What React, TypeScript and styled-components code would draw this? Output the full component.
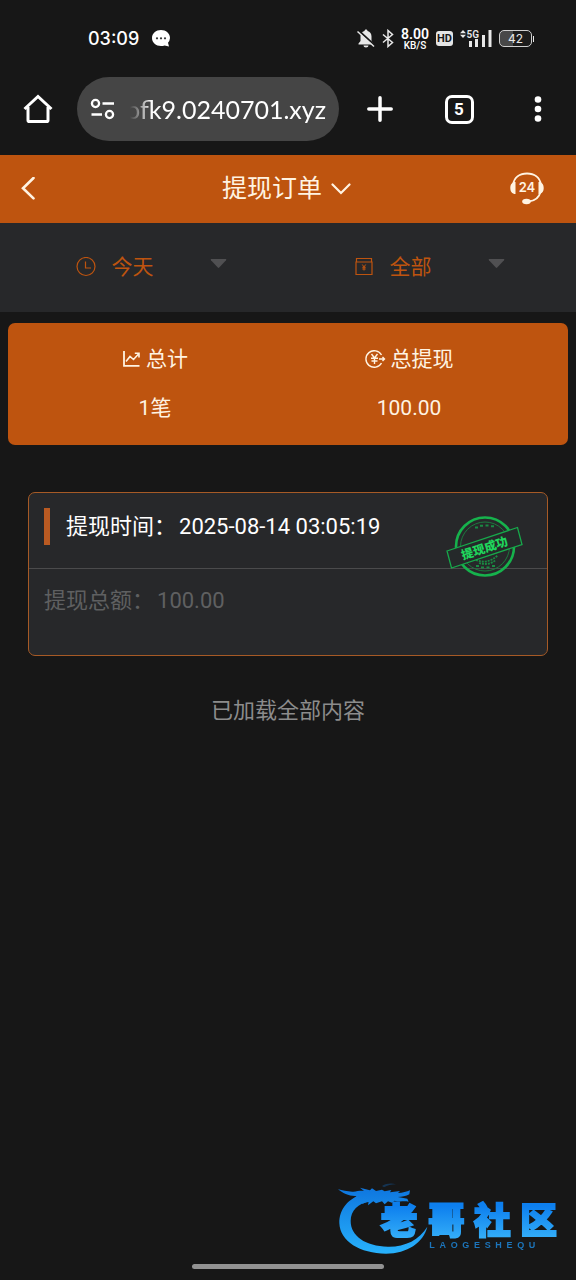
import React from "react";
import styled, { createGlobalStyle } from "styled-components";

const cjk = `Roboto, "Noto Sans CJK SC", sans-serif`;
const brand = "#be540f";
const cream = "#fff3e2";

const GlobalStyle = createGlobalStyle`
  *, *::before, *::after { box-sizing: border-box; }
  body { margin: 0; background: #171717; font-family: ${cjk}; color: #fff; }
  button { border: 0; padding: 0; background: none; color: inherit; font: inherit; cursor: pointer; }
  svg { display: block; flex: none; }
  dl, dt, dd, h1, p { margin: 0; font-weight: 400; }
`;

const Screen = styled.div`
  min-height: 100vh;
  display: flex;
  flex-direction: column;
`;

/* Status bar */
const StatusBar = styled.header`
  height: 77px;
  padding: 0 42px 0 88px;
  display: flex;
  align-items: center;
  justify-content: space-between;
`;
const StatusGroup = styled.div<{ $gap: number }>`
  display: flex;
  align-items: center;
  gap: ${(p) => p.$gap}px;
  color: #e8e8e8;
`;
const Clock = styled.time`
  font: 500 18px/24px Inter, sans-serif;
  color: #fff;
`;
const NetSpeed = styled.div`
  display: flex;
  flex-direction: column;
  align-items: center;
  color: #fff;
  font: 500 10px/9px Roboto, sans-serif;
`;
const SpeedValue = styled.strong`
  font-size: 14px;
  line-height: 13px;
  font-weight: 600;
`;
const HdBadge = styled.span`
  width: 17px;
  height: 15px;
  border-radius: 3px;
  background: #e4e4e4;
  color: #171717;
  font: 700 11px/15px Roboto, sans-serif;
  text-align: center;
`;
const Battery = styled.span`
  width: 33px;
  height: 17px;
  border: 1px solid #cfcfcf;
  border-radius: 5px;
  background: linear-gradient(90deg, #484848 42%, #1c1c1c 42%);
  color: #e8e8e8;
  font: 400 12px/15px Inter, sans-serif;
  text-align: center;
`;

/* Browser toolbar */
const BrowserBar = styled.nav`
  display: flex;
  align-items: center;
  padding: 0 14px 14px;
`;
const ToolButton = styled.button`
  width: 48px;
  height: 48px;
  display: flex;
  align-items: center;
  justify-content: center;
`;
const ToolGroup = styled.div`
  display: flex;
  gap: 31px;
  padding-left: 17px;
`;
const AddressPill = styled.div`
  flex: 1;
  min-width: 0;
  height: 64px;
  margin-left: 15px;
  padding: 0 13px;
  border-radius: 32px;
  background: #454545;
  display: flex;
  align-items: center;
  gap: 4px;
`;
const AddressInput = styled.input`
  flex: 1;
  min-width: 0;
  border: 0;
  padding: 0;
  outline: 0;
  background: none;
  color: #fff;
  text-align: right;
  font: 400 25px/36px Lato, sans-serif;
  mask-image: linear-gradient(90deg, transparent 10px, #000 32px);
`;
const TabCount = styled.span`
  width: 29px;
  height: 29px;
  border: 3px solid #fff;
  border-radius: 7px;
  font: 700 17px/23px Roboto, sans-serif;
  text-align: center;
`;

/* Page header */
const TitleBar = styled.div`
  height: 68px;
  padding: 0 25px 0 18px;
  background: ${brand};
  color: ${cream};
  display: grid;
  grid-template-columns: 52px 1fr 48px;
  align-items: center;
  justify-items: center;
`;
const BackButton = styled(ToolButton)`
  justify-self: start;
  width: 20px;
`;
const TitleButton = styled.button`
  display: flex;
  align-items: center;
  gap: 9px;
  font-size: 25px;
  line-height: 36px;
`;

/* Filters */
const Filters = styled.form`
  height: 89px;
  padding: 0 8px 2px 12px;
  background: #27282a;
  display: grid;
  grid-template-columns: 1fr 1fr;
  align-items: center;
  justify-items: center;
`;
const Filter = styled.label`
  width: 151px;
  display: flex;
  align-items: center;
  gap: 16px;
  color: ${brand};
`;
const FilterSelect = styled.select`
  flex: 1;
  min-width: 0;
  appearance: none;
  border: 0;
  padding: 0;
  outline: 0;
  background: none;
  color: ${brand};
  font: 400 21px/32px ${cjk};
`;

/* Totals */
const Summary = styled.dl`
  margin: 11px 8px 0;
  padding: 21px 32px 22px 20px;
  border-radius: 7px;
  background: ${brand};
  color: ${cream};
  display: grid;
  grid-template-columns: 1fr 1fr;
  font-size: 21px;
  line-height: 30px;
`;
const Total = styled.div`
  display: flex;
  flex-direction: column;
  align-items: center;
  gap: 19px;
`;
const TotalLabel = styled.dt`
  display: flex;
  align-items: center;
  gap: 5px;
`;

/* Order */
const OrderCard = styled.article`
  position: relative;
  margin: 47px 28px 0;
  border: 1px solid #a65a26;
  border-radius: 7px;
  background: #27282a;
  font-size: 22px;
  line-height: 30px;
`;
const OrderHead = styled.div`
  padding: 15px 15px 23px;
  border-bottom: 1px solid #4b4b4c;
  display: flex;
  align-items: center;
  gap: 16px;
`;
const Marker = styled.span`
  width: 6px;
  height: 37px;
  background: #b95a22;
`;
const Field = styled.p`
  display: flex;
  gap: 3px;
`;
const OrderBody = styled.div`
  padding: 17px 15px 39px;
  color: #5f6061;
`;
const Stamp = styled.svg`
  position: absolute;
  top: 21px;
  right: 23px;
`;
const EndNote = styled.p`
  padding: 39px 0;
  text-align: center;
  color: #8c8c8c;
  font-size: 22px;
  line-height: 32px;
`;

const Watermark = styled.svg`
  position: fixed;
  right: 14px;
  bottom: 23px;
`;
const HomeIndicator = styled.div`
  width: 192px;
  height: 5px;
  margin: auto auto 11px;
  border-radius: 3px;
  background: #929292;
`;

const line = { fill: "none", stroke: "currentColor" } as const;

const ChatIcon = () => (
  <svg width="18" height="17" viewBox="0 0 18 17">
    <path d="M9 0C4 0 0 3.500 0 8s4 8 9 8c1.300 0 2.500-.200 3.600-.600L17 16.500l-1-3.700A8 8 0 0 0 18 8c0-4.500-4-8-9-8Z" fill="#fff" />
    <circle cx="5" cy="8.300" r="1.100" fill="#333" />
    <circle cx="9" cy="8.300" r="1.100" fill="#333" />
    <circle cx="13" cy="8.300" r="1.100" fill="#333" />
  </svg>
);

const MutedBellIcon = () => (
  <svg width="18" height="19" viewBox="0 0 18 19">
    <path d="M9 0.500c1 0 1.500.700 1.500 1.500 2.700.700 4 2.800 4 5.500v4.500l2 2.500v1h-15v-1l2-2.500V7.500c0-2.700 1.300-4.800 4-5.500C7.500 1.200 8 .500 9 .500Z" fill="currentColor" />
    <path d="M6.500 16.500h5a2.500 2 0 0 1-5 0Z" fill="currentColor" />
    <path d="M1.500 1.500 18 16.500" stroke="#171717" strokeWidth="2" />
    <path d="M.5 2.500 17 17.500" stroke="currentColor" strokeWidth="1.500" />
  </svg>
);

const BluetoothIcon = () => (
  <svg width="12" height="19" viewBox="0 0 12 19">
    <path d="M1 5.500 10.500 13.500 6 17.500V1.500l4.500 4L1 13.500" {...line} strokeWidth="1.500" />
  </svg>
);

const SignalIcon = () => (
  <svg width="32" height="19" viewBox="0 0 32 19">
    <path d="m3 1 3 3.200H0ZM3 9 0 5.800h6Z" fill="currentColor" />
    <text x="6.500" y="8.500" fontSize="10" fontWeight="600" fontFamily="Roboto, sans-serif" fill="currentColor">5G</text>
    <path d="M9 12h3v6H9ZM15 10h3v8h-3ZM22 6h3v12h-3ZM28.500 1h3v17h-3Z" fill="currentColor" />
  </svg>
);

const BatteryTip = () => (
  <svg width="1" height="6" viewBox="0 0 1 6"><path d="M0 0h1v6H0Z" fill="currentColor" /></svg>
);

const HomeIcon = () => (
  <svg width="30" height="30" viewBox="0 0 30 30">
    <path d="M1.500 15 15 2.500 28.500 15M5 13v13.200c0 .800.500 1.300 1.300 1.300h17.400c.800 0 1.300-.500 1.300-1.300V13" {...line} strokeWidth="3" />
  </svg>
);

const SiteSettingsIcon = () => (
  <svg width="26" height="22" viewBox="0 0 26 22">
    <g {...line} strokeWidth="2.300">
      <circle cx="5.500" cy="5.500" r="3.600" />
      <path d="M12.500 5.500H24M1.500 16.500H12" />
      <circle cx="19.500" cy="16.500" r="3.600" />
    </g>
  </svg>
);

const PlusIcon = () => (
  <svg width="26" height="26" viewBox="0 0 26 26">
    <path d="M13 1.800v22.400M1.800 13h22.400" {...line} strokeWidth="3.500" strokeLinecap="round" />
  </svg>
);

const MoreIcon = () => (
  <svg width="8" height="28" viewBox="0 0 8 28" fill="currentColor">
    <circle cx="4" cy="4.500" r="3.300" />
    <circle cx="4" cy="14" r="3.300" />
    <circle cx="4" cy="23.500" r="3.300" />
  </svg>
);

const BackIcon = () => (
  <svg width="14" height="24" viewBox="0 0 14 24">
    <path d="M12.500 1 2 11.200l10.500 10.200" {...line} strokeWidth="2.600" strokeLinecap="round" />
  </svg>
);

const ChevronDown = () => (
  <svg width="20" height="12" viewBox="0 0 20 12">
    <path d="m1.500 1.500 8.500 8.500 8.500-8.500" {...line} strokeWidth="2.200" strokeLinecap="round" />
  </svg>
);

const SupportIcon = () => (
  <svg width="34" height="34" viewBox="0 0 34 34" fill="currentColor">
    <path d="M3 13C4 5 10 1.500 17 1.500S30 5 31 13M30.500 20c-1.500 6-6.500 9-12 9.500" {...line} strokeWidth="1.800" />
    <path d="M5.500 10v12C2 22 .3 19.500.3 16S2 10 5.500 10ZM28.500 10v12c3.500 0 5.200-2.500 5.200-6s-1.700-6-5.200-6Z" />
    <ellipse cx="16.500" cy="29.500" rx="4.300" ry="2.700" />
    <text x="17" y="20" textAnchor="middle" fontSize="13" fontWeight="600" fontFamily="Inter, sans-serif">24</text>
  </svg>
);

const ClockIcon = () => (
  <svg width="20" height="20" viewBox="0 0 20 20">
    <g {...line} strokeWidth="1.200">
      <circle cx="10" cy="9.500" r="9" />
      <path d="M9.500 4.500V11H15" />
    </g>
  </svg>
);

const WalletIcon = () => (
  <svg width="20" height="20" viewBox="0 0 20 20">
    <g {...line} strokeWidth="1.200">
      <path d="M2 5h16v12.500H2ZM2.500 5V1.500h15V5" />
      <path d="m8.300 7.500 1.700 2.500 1.700-2.500M10 10v3.500M8.300 10.300h3.400M8.300 12h3.400" strokeWidth="1" />
    </g>
  </svg>
);

const CaretIcon = () => (
  <svg width="17" height="16" viewBox="0 0 17 16">
    <path d="M1.500 0h14c.800 0 1 .600.500 1.200L9.200 8.600c-.500.500-.900.500-1.400 0L1 1.200C.500.600.700 0 1.500 0Z" fill="#505052" />
  </svg>
);

const TrendIcon = () => (
  <svg width="19" height="19" viewBox="0 0 19 19">
    <g {...line} strokeWidth="1.800">
      <path d="M2 1v14.800h15.500" />
      <path d="m4 11.500 4-5 3.500 3L17 3.500M12.800 3.300H17V7.500" strokeWidth="1.600" />
    </g>
  </svg>
);

const YenOutIcon = () => (
  <svg width="21" height="19" viewBox="0 0 21 19">
    <g {...line} strokeWidth="1.400">
      <path d="M16.500 5A8.300 8.300 0 1 0 16.500 13M14 9h5.500M17.500 7l2 2-2 2" />
      <path d="m6.500 4 3 4 3-4M9.500 8v6M6 8.300h7M6.500 11h6" />
    </g>
  </svg>
);

const SuccessStamp = () => (
  <Stamp width="78" height="64" viewBox="0 0 78 64" role="img" aria-label="提现成功">
    <g fill="none" stroke="#17a94b">
      <circle cx="39" cy="32.500" r="29" strokeWidth="2.600" stroke="#16b24c" />
      <circle cx="39" cy="32.500" r="24.500" strokeWidth="1" stroke="#1c7a3e" />
      <path d="M29 13.500h3M34 11.800h3M39.500 11.500h3M45 12.300h3M30 52h3M35 53.500h3M40.500 53.500h3M46 52h3" strokeWidth="2" stroke="#1a8a43" />
      <path d="M30 46c7 3 15 2 22-5M33 49c6 2 12 1 17-3M35 43l17-5" strokeWidth="1.800" strokeDasharray="2 1" stroke="#1a8a43" />
      <path d="M1 37 71.500 13.500 76 30.500 5.500 54Z" fill="#25292a" strokeWidth="1.300" />
    </g>
    <text
      transform="translate(38.500 34) rotate(-18)"
      y="4.500"
      textAnchor="middle"
      fontFamily='"Noto Sans CJK SC", sans-serif'
      fontSize="12"
      fontWeight="900"
      fill="#1fd65c"
    >
      提现成功
    </text>
  </Stamp>
);

const CommunityLogo = () => (
  <Watermark width="228" height="77" viewBox="42 30 684 231" role="img" aria-label="老哥社区">
    <defs>
      <linearGradient id="logoBlue" gradientUnits="userSpaceOnUse" x1="0" y1="60" x2="0" y2="245">
        <stop offset="0" stopColor="#0f78e0" />
        <stop offset="1" stopColor="#27b0fb" />
      </linearGradient>
      <linearGradient id="nameBlue" gradientUnits="userSpaceOnUse" x1="0" y1="108" x2="0" y2="205">
        <stop offset="0" stopColor="#0d7fee" />
        <stop offset="1" stopColor="#34aef8" />
      </linearGradient>
    </defs>
    <g fill="url(#logoBlue)">
      <path d="M132 72C84 84 57 118 58 160c2 54 62 91 140 91 64-1 112-33 124-81-24 40-68 61-118 60C136 229 92 198 92 153c0-32 22-54 58-58Z" />
      <path d="M54 58c14 2 30 8 46 7 12-1 22-4 32-2l-12-10 30 8 6-6 12 8 18-4 8 5 20-4-4 7 30-4-6 6c14 0 26-4 36-8l-2 12c-10 6-22 7-34 8l28 5 4 9c-16-3-28 2-42-3l-8 6-12-4-10 9-8-9-18 6-8-6-16 12 2-12-20 8 4-10-22 6-16 4c2-10 10-18 18-24-20 2-42-8-56-20Z" />
      <path d="M186 48c14-8 28-9 42-5-14 0-26 3-36 9Z" opacity="0.300" />
    </g>
    <text
      x="182 324 462 601"
      y="192"
      fontSize="110"
      fontWeight="900"
      fontFamily='"Noto Sans CJK SC", sans-serif'
      fill="url(#nameBlue)"
      stroke="url(#nameBlue)"
      strokeWidth="6"
    >
      老哥社区
    </text>
    <text x="328" y="233" fontSize="27" fontWeight="700" letterSpacing="14" fontFamily='"Liberation Sans", sans-serif' fill="#1c75bb">
      LAOGESHEQU
    </text>
  </Watermark>
);

export default function App() {
  return (
    <Screen>
      <GlobalStyle />
      <StatusBar>
        <StatusGroup $gap={13}>
          <Clock>03:09</Clock>
          <ChatIcon />
        </StatusGroup>
        <StatusGroup $gap={7}>
          <MutedBellIcon />
          <BluetoothIcon />
          <NetSpeed>
            <SpeedValue>8.00</SpeedValue>
            KB/S
          </NetSpeed>
          <HdBadge>HD</HdBadge>
          <SignalIcon />
          <StatusGroup $gap={1}>
            <Battery>42</Battery>
            <BatteryTip />
          </StatusGroup>
        </StatusGroup>
      </StatusBar>

      <BrowserBar>
        <ToolButton aria-label="主页"><HomeIcon /></ToolButton>
        <AddressPill>
          <SiteSettingsIcon />
          <AddressInput aria-label="网址" defaultValue="ofk9.0240701.xyz" />
        </AddressPill>
        <ToolGroup>
          <ToolButton aria-label="新标签页"><PlusIcon /></ToolButton>
          <ToolButton aria-label="标签页"><TabCount>5</TabCount></ToolButton>
          <ToolButton aria-label="更多"><MoreIcon /></ToolButton>
        </ToolGroup>
      </BrowserBar>

      <TitleBar>
        <BackButton aria-label="返回"><BackIcon /></BackButton>
        <h1>
          <TitleButton>提现订单<ChevronDown /></TitleButton>
        </h1>
        <ToolButton aria-label="客服"><SupportIcon /></ToolButton>
      </TitleBar>

      <Filters>
        <Filter>
          <ClockIcon />
          <FilterSelect aria-label="日期"><option>今天</option></FilterSelect>
          <CaretIcon />
        </Filter>
        <Filter>
          <WalletIcon />
          <FilterSelect aria-label="类型"><option>全部</option></FilterSelect>
          <CaretIcon />
        </Filter>
      </Filters>

      <main>
        <Summary>
          <Total>
            <TotalLabel><TrendIcon />总计</TotalLabel>
            <dd>1笔</dd>
          </Total>
          <Total>
            <TotalLabel><YenOutIcon />总提现</TotalLabel>
            <dd>100.00</dd>
          </Total>
        </Summary>

        <OrderCard>
          <OrderHead>
            <Marker />
            <Field><span>提现时间：</span><time>2025-08-14 03:05:19</time></Field>
          </OrderHead>
          <OrderBody>
            <Field><span>提现总额：</span><span>100.00</span></Field>
          </OrderBody>
          <SuccessStamp />
        </OrderCard>

        <EndNote>已加载全部内容</EndNote>
      </main>

      <HomeIndicator />
      <CommunityLogo />
    </Screen>
  );
}
